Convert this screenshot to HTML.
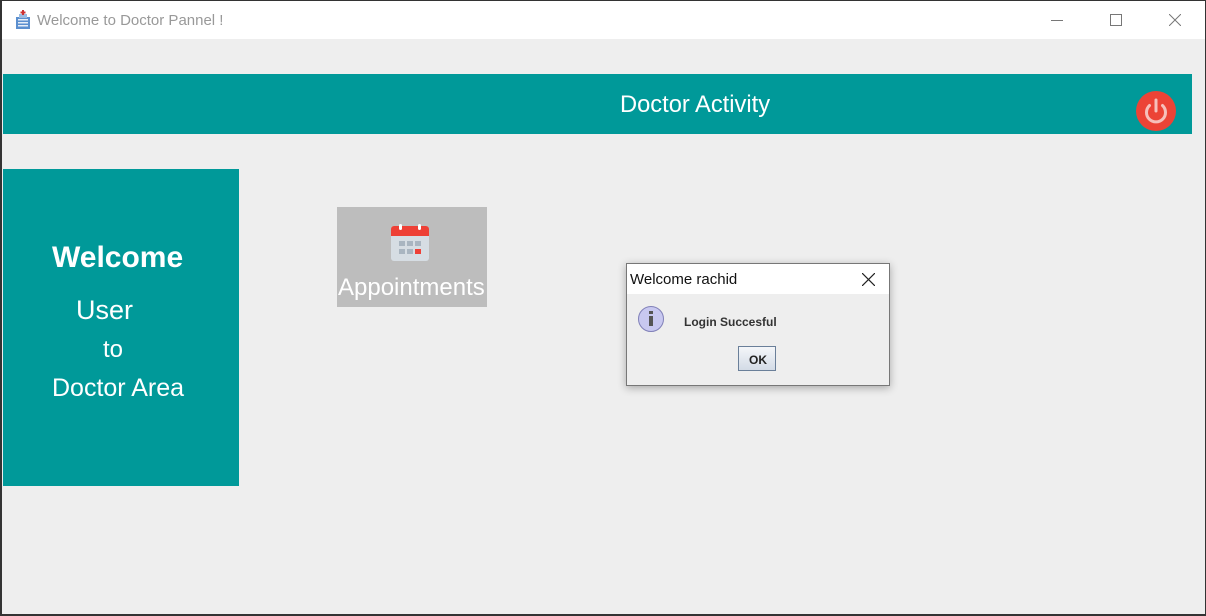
<!DOCTYPE html>
<html><head><style>
body{margin:0;width:1206px;height:616px;overflow:hidden;background:#333;font-family:"Liberation Sans",sans-serif;position:relative}
.win{position:absolute;left:2px;top:1px;width:1203px;height:613px;background:#eeeeee}
.tb{position:absolute;left:0;top:0;width:1203px;height:38px;background:#fff}
.abs{position:absolute;white-space:nowrap}
</style></head><body>
<div class="win">
<div class="tb">
 <svg class="abs" style="left:11px;top:9px" width="20" height="20" viewBox="0 0 20 20"><rect x="3" y="7" width="14" height="12" fill="#5b8fcf"/><rect x="6" y="4" width="8" height="4" fill="#9bbbe0"/><rect x="9" y="0" width="2" height="5" fill="#c33"/><rect x="7.5" y="1.5" width="5" height="2" fill="#c33"/><g fill="#e6eef8"><rect x="5" y="9" width="10" height="1.5"/><rect x="5" y="12" width="10" height="1.5"/><rect x="5" y="15" width="10" height="1.5"/></g></svg>
 <div class="abs" style="left:35px;top:11px;color:#999;font-size:15px">Welcome to Doctor Pannel !</div>
 <div class="abs" style="left:1049px;top:19px;width:12px;height:1px;background:#777"></div>
 <div class="abs" style="left:1108px;top:13px;width:10px;height:10px;border:1px solid #777"></div>
 <svg class="abs" style="left:1167px;top:13px" width="12" height="12"><path d="M0 0L12 12M12 0L0 12" stroke="#777" stroke-width="1"/></svg>
</div>
<div class="abs" style="left:1px;top:73px;width:1189px;height:60px;background:#009999"></div>
<div class="abs" style="left:618px;top:91px;font-size:23.7px;color:#fff">Doctor Activity</div>
<svg class="abs" style="left:1133px;top:89px" width="42" height="42" viewBox="0 0 42 42"><circle cx="21" cy="21" r="20" fill="#ec4336"/><path d="M14.5 15.5A9.5 9.5 0 1 0 27.5 15.5" fill="none" stroke="#f6c0bb" stroke-width="3" stroke-linecap="round"/><path d="M21 10V21" stroke="#f6c0bb" stroke-width="3" stroke-linecap="round"/></svg>
<div class="abs" style="left:1px;top:168px;width:236px;height:317px;background:#009999;color:#fff">
 <div class="abs" style="left:49px;top:72px;font-size:30px;font-weight:bold">Welcome</div>
 <div class="abs" style="left:73px;top:126px;font-size:27px">User</div>
 <div class="abs" style="left:100px;top:167px;font-size:24px">to</div>
 <div class="abs" style="left:49px;top:205px;font-size:25px">Doctor Area</div>
</div>
<div class="abs" style="left:335px;top:206px;width:150px;height:100px;background:#bdbdbd">
 <svg class="abs" style="left:53px;top:17px" width="40" height="38" viewBox="0 0 40 38"><rect x="1" y="2" width="38" height="35" rx="3" fill="#d6dde3"/><path d="M1 5a3 3 0 0 1 3-3h32a3 3 0 0 1 3 3v7H1z" fill="#ee4036"/><rect x="9" y="0" width="3" height="6" rx="1.5" fill="#fff"/><rect x="28" y="0" width="3" height="6" rx="1.5" fill="#fff"/><g fill="#a9b5c0"><rect x="9" y="17" width="6" height="5"/><rect x="17" y="17" width="6" height="5"/><rect x="25" y="17" width="6" height="5"/><rect x="9" y="25" width="6" height="5"/><rect x="17" y="25" width="6" height="5"/></g><rect x="25" y="25" width="6" height="5" fill="#ee4036"/></svg>
 <div class="abs" style="left:1px;top:67px;font-size:24px;color:#fff">Appointments</div>
</div>
<div class="abs" style="left:624px;top:262px;width:262px;height:121px;border:1px solid #777;background:#eeeeee;box-shadow:0 2px 8px rgba(0,0,0,.3)">
 <div class="abs" style="left:0;top:0;width:262px;height:30px;background:#fff"></div>
 <div class="abs" style="left:3px;top:7px;font-size:15px;color:#111">Welcome rachid</div>
 <svg class="abs" style="left:235px;top:9px" width="13" height="13"><path d="M0 0L13 13M13 0L0 13" stroke="#222" stroke-width="1.2"/></svg>
 <svg class="abs" style="left:10px;top:41px" width="28" height="28"><circle cx="14" cy="14" r="12.5" fill="#c8c8f0" stroke="#8080b8"/><rect x="12" y="11" width="4" height="10" fill="#555"/><rect x="12" y="6" width="4" height="3" fill="#555"/></svg>
 <div class="abs" style="left:57px;top:51px;font-size:12px;font-weight:bold;color:#333">Login Succesful</div>
 <div class="abs" style="left:111px;top:82px;width:38px;height:25px;border:1px solid #6a7f99;background:linear-gradient(#f4f6f9,#d3dbe6);box-sizing:border-box"><div class="abs" style="left:10px;top:6px;font-size:12px;font-weight:bold;color:#222">OK</div></div>
</div>
</div>
</body></html>
